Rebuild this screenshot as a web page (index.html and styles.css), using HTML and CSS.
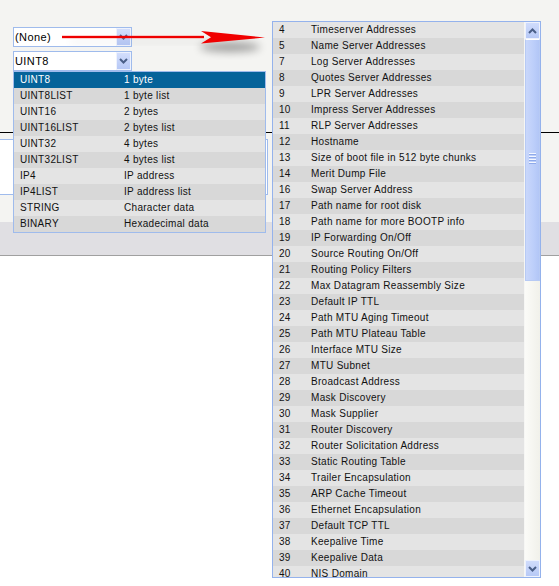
FILE: index.html
```html
<!DOCTYPE html>
<html>
<head>
<meta charset="utf-8">
<link rel="stylesheet" href="styles.css">
</head>
<body>
<div class="page">
  <div class="top">
    <div class="controls">
      <div class="select">
        <span class="value">(None)</span>
        <span class="btn"><svg width="9" height="6" viewBox="0 0 9 6"><path d="M1 1 L4.5 4.5 L8 1" fill="none" stroke="#4a5f88" stroke-width="2"/></svg></span>
      </div>
      <div class="combo">
        <div class="select">
          <span class="value">UINT8</span>
          <span class="btn"><svg width="9" height="6" viewBox="0 0 9 6"><path d="M1 1 L4.5 4.5 L8 1" fill="none" stroke="#4a5f88" stroke-width="2"/></svg></span>
        </div>
        <div class="popup">
          <div class="prow sel"><span class="pc1">UINT8</span><span>1 byte</span></div>
          <div class="prow"><span class="pc1">UINT8LIST</span><span>1 byte list</span></div>
          <div class="prow"><span class="pc1">UINT16</span><span>2 bytes</span></div>
          <div class="prow"><span class="pc1">UINT16LIST</span><span>2 bytes list</span></div>
          <div class="prow"><span class="pc1">UINT32</span><span>4 bytes</span></div>
          <div class="prow"><span class="pc1">UINT32LIST</span><span>4 bytes list</span></div>
          <div class="prow"><span class="pc1">IP4</span><span>IP address</span></div>
          <div class="prow"><span class="pc1">IP4LIST</span><span>IP address list</span></div>
          <div class="prow"><span class="pc1">STRING</span><span>Character data</span></div>
          <div class="prow"><span class="pc1">BINARY</span><span>Hexadecimal data</span></div>
        </div>
      </div>
    </div>
  </div>
  <div class="rule"></div>
  <div class="mid"><div class="panel"></div></div>
  <div class="gray"></div>
  <div class="white"></div>

  <svg class="arrow" width="240" height="40" viewBox="40 20 240 40">
    <defs>
      <filter id="blur" x="-50%" y="-100%" width="200%" height="300%"><feGaussianBlur stdDeviation="4"/></filter>
      <filter id="blur2" x="-50%" y="-100%" width="200%" height="300%"><feGaussianBlur stdDeviation="0.6"/></filter>
    </defs>
    <ellipse cx="230" cy="47" rx="30" ry="5" fill="#000" opacity="0.35" filter="url(#blur)"/>
    <rect x="70" y="40" width="140" height="3" fill="#000" opacity="0.08" filter="url(#blur)"/>
    <rect x="62" y="35.5" width="142" height="3" fill="#ff3030" opacity="0.45" filter="url(#blur2)"/>
    <rect x="62" y="36" width="142" height="2" fill="#ee0000"/>
    <path d="M201 31 L265 37.5 L201 43.5 L211 37.2 Z" fill="#f00000" filter="url(#blur2)"/>
  </svg>

  <div class="list">
    <div class="rows">
      <div class="row"><span class="num">4</span><span>Timeserver Addresses</span></div>
      <div class="row"><span class="num">5</span><span>Name Server Addresses</span></div>
      <div class="row"><span class="num">7</span><span>Log Server Addresses</span></div>
      <div class="row"><span class="num">8</span><span>Quotes Server Addresses</span></div>
      <div class="row"><span class="num">9</span><span>LPR Server Addresses</span></div>
      <div class="row"><span class="num">10</span><span>Impress Server Addresses</span></div>
      <div class="row"><span class="num">11</span><span>RLP Server Addresses</span></div>
      <div class="row"><span class="num">12</span><span>Hostname</span></div>
      <div class="row"><span class="num">13</span><span>Size of boot file in 512 byte chunks</span></div>
      <div class="row"><span class="num">14</span><span>Merit Dump File</span></div>
      <div class="row"><span class="num">16</span><span>Swap Server Address</span></div>
      <div class="row"><span class="num">17</span><span>Path name for root disk</span></div>
      <div class="row"><span class="num">18</span><span>Path name for more BOOTP info</span></div>
      <div class="row"><span class="num">19</span><span>IP Forwarding On/Off</span></div>
      <div class="row"><span class="num">20</span><span>Source Routing On/Off</span></div>
      <div class="row"><span class="num">21</span><span>Routing Policy Filters</span></div>
      <div class="row"><span class="num">22</span><span>Max Datagram Reassembly Size</span></div>
      <div class="row"><span class="num">23</span><span>Default IP TTL</span></div>
      <div class="row"><span class="num">24</span><span>Path MTU Aging Timeout</span></div>
      <div class="row"><span class="num">25</span><span>Path MTU Plateau Table</span></div>
      <div class="row"><span class="num">26</span><span>Interface MTU Size</span></div>
      <div class="row"><span class="num">27</span><span>MTU Subnet</span></div>
      <div class="row"><span class="num">28</span><span>Broadcast Address</span></div>
      <div class="row"><span class="num">29</span><span>Mask Discovery</span></div>
      <div class="row"><span class="num">30</span><span>Mask Supplier</span></div>
      <div class="row"><span class="num">31</span><span>Router Discovery</span></div>
      <div class="row"><span class="num">32</span><span>Router Solicitation Address</span></div>
      <div class="row"><span class="num">33</span><span>Static Routing Table</span></div>
      <div class="row"><span class="num">34</span><span>Trailer Encapsulation</span></div>
      <div class="row"><span class="num">35</span><span>ARP Cache Timeout</span></div>
      <div class="row"><span class="num">36</span><span>Ethernet Encapsulation</span></div>
      <div class="row"><span class="num">37</span><span>Default TCP TTL</span></div>
      <div class="row"><span class="num">38</span><span>Keepalive Time</span></div>
      <div class="row"><span class="num">39</span><span>Keepalive Data</span></div>
      <div class="row"><span class="num">40</span><span>NIS Domain</span></div>
    </div>
    <div class="scrollbar">
      <div class="sbtn"><svg width="9" height="6" viewBox="0 0 9 6"><path d="M1 5 L4.5 1.5 L8 5" fill="none" stroke="#4a5f88" stroke-width="2"/></svg></div>
      <div class="thumb">
        <div class="grip"><i></i><i></i><i></i><i></i></div>
      </div>
      <div class="track"></div>
      <div class="sbtn"><svg width="9" height="6" viewBox="0 0 9 6"><path d="M1 1 L4.5 4.5 L8 1" fill="none" stroke="#4a5f88" stroke-width="2"/></svg></div>
    </div>
  </div>
</div>
</body>
</html>
```

FILE: styles.css
```css
html, body {
  margin: 0;
  padding: 0;
}
body {
  background: #ffffff;
  font-family: "Liberation Sans", Arial, sans-serif;
  font-size: 10px;
  color: #111;
  letter-spacing: 0.3px;
}
.page {
  position: relative;
  width: 559px;
  height: 586px;
  overflow: hidden;
}
.top {
  height: 132px;
  background: #f4f4f2;
  box-sizing: border-box;
  padding: 27px 0 0 13px;
}
.controls {
  display: flex;
  flex-direction: column;
  gap: 4px;
  width: 119px;
}
.combo {
  position: relative;
}
.select {
  display: flex;
  align-items: stretch;
  width: 119px;
  height: 20px;
  box-sizing: border-box;
  border: 1px solid #9fbbec;
  background: #fff;
}
.value {
  flex: 1;
  padding-left: 1px;
  font-size: 11px;
  line-height: 18px;
  letter-spacing: 0.4px;
  color: #000;
}
.btn {
  width: 15px;
  box-sizing: border-box;
  border: 1px solid #eef2fd;
  background: linear-gradient(to bottom, #d3defc, #b6c8f6);
  display: flex;
  align-items: center;
  justify-content: center;
}
.popup {
  position: absolute;
  left: 0;
  top: 100%;
  width: 253px;
  box-sizing: border-box;
  border: 1px solid #9fbbec;
  background: #e4e4e4;
  z-index: 2;
}
.prow {
  display: flex;
  height: 16px;
  line-height: 16px;
  padding-left: 6px;
  background: #e4e4e4;
}
.prow:nth-child(even) {
  background: #d8d8d8;
}
.prow.sel {
  background: #05639a;
  color: #fff;
}
.pc1 {
  width: 104px;
}
.rule {
  height: 1px;
  background: #000;
}
.mid {
  background: #f4f4f2;
  padding: 6px 0 27px;
}
.panel {
  width: 268px;
  height: 56px;
  box-sizing: border-box;
  border: 1px solid #9fbbec;
  border-left: none;
  background: #fff;
}
.gray {
  height: 33px;
  background: #e0dfe3;
  border-bottom: 1px solid #a0a0a0;
}
.white {
  height: 330px;
  background: #fff;
}
.arrow {
  position: absolute;
  left: 40px;
  top: 20px;
  z-index: 3;
}
.list {
  position: absolute;
  left: 272px;
  top: 21px;
  width: 269px;
  height: 557px;
  box-sizing: border-box;
  border: 1px solid #94b2ec;
  background: #fff;
  display: flex;
  overflow: hidden;
  z-index: 2;
}
.rows {
  width: 251px;
  overflow: hidden;
  border-right: 1px solid #f6f6f4;
}
.row {
  display: flex;
  height: 16px;
  line-height: 16px;
  padding-left: 6px;
  background: #e4e4e4;
  white-space: nowrap;
}
.row:nth-child(even) {
  background: #d8d8d8;
}
.num {
  width: 32px;
  flex: none;
}
.scrollbar {
  width: 15px;
  display: flex;
  flex-direction: column;
  background: linear-gradient(to right, #fbfbf8, #f1f1ea);
}
.sbtn {
  height: 17px;
  flex: none;
  box-sizing: border-box;
  border: 1px solid #eef2fd;
  background: linear-gradient(to bottom, #d0dcfc, #b7c9f6);
  display: flex;
  align-items: center;
  justify-content: center;
}
.thumb {
  height: 242px;
  flex: none;
  box-sizing: border-box;
  border: 1px solid #b7caf4;
  border-top-color: #fff;
  background: linear-gradient(to right, #c9d7fb, #bccefa 60%, #b2c6f6);
  display: flex;
  align-items: center;
  justify-content: center;
}
.grip {
  display: flex;
  flex-direction: column;
  gap: 1px;
  margin-top: -3px;
}
.grip i {
  display: block;
  width: 7px;
  height: 1px;
  background: #f4f7ff;
  border-bottom: 1px solid #8faaea;
}
.track {
  flex: 1;
}
```
